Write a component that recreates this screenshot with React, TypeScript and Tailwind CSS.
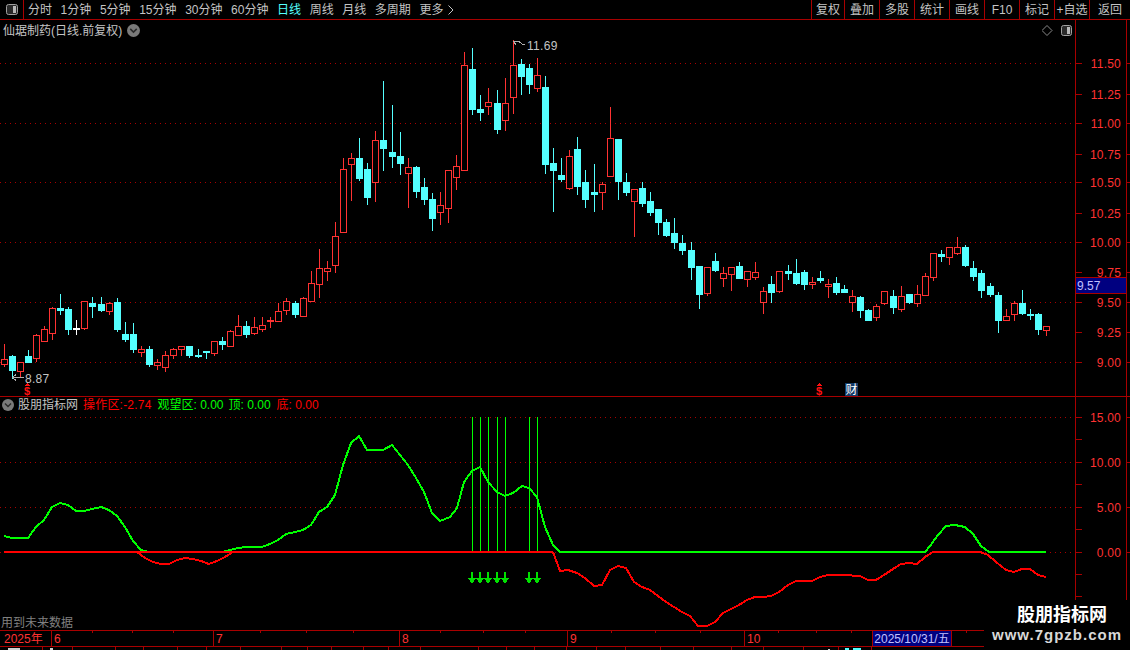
import React from 'react'

const LINE = '#a80000'
const RED = '#ff3232'
const CYAN = '#54ffff'
const GREEN = '#00ff00'
const FONT = "'Liberation Sans','Noto Sans CJK SC',sans-serif"

// wick top, body top, body bottom, wick bottom, colour (page pixels)
type Candle = [number, number, number, number, 'r' | 'c' | 'w']
const candles: Candle[] = [
  [344, 359, 364, 366, 'r'], [355, 356, 370, 378, 'c'], [362, 362, 371, 376, 'r'], [350, 356, 362, 362, 'c'],
  [334, 335, 358, 361, 'r'], [326, 329, 341, 341, 'r'], [307, 308, 333, 339, 'r'], [294, 308, 310, 314, 'c'],
  [307, 309, 329, 334, 'c'], [320, 328, 329, 334, 'w'], [301, 301, 328, 329, 'r'], [297, 303, 306, 317, 'c'],
  [297, 304, 310, 311, 'c'], [302, 303, 311, 314, 'r'], [298, 302, 329, 331, 'c'], [322, 334, 339, 341, 'c'],
  [323, 334, 349, 352, 'c'], [346, 349, 352, 356, 'r'], [346, 349, 364, 366, 'c'], [359, 362, 365, 369, 'r'],
  [351, 355, 367, 371, 'r'], [348, 349, 355, 358, 'r'], [346, 346, 349, 355, 'r'], [346, 346, 355, 357, 'c'],
  [349, 355, 356, 357, 'c'], [351, 351, 352, 358, 'c'], [341, 341, 353, 355, 'r'], [337, 341, 344, 349, 'c'],
  [330, 331, 346, 346, 'r'], [315, 326, 335, 335, 'r'], [321, 326, 334, 337, 'c'], [317, 327, 333, 334, 'r'],
  [317, 325, 329, 331, 'r'], [317, 320, 321, 327, 'r'], [303, 311, 321, 321, 'r'], [298, 301, 310, 314, 'r'],
  [301, 303, 314, 317, 'c'], [297, 298, 316, 316, 'r'], [271, 283, 301, 301, 'r'], [249, 268, 284, 297, 'r'],
  [261, 268, 271, 280, 'r'], [222, 236, 265, 272, 'r'], [158, 169, 232, 232, 'r'], [153, 158, 164, 200, 'r'],
  [138, 158, 178, 180, 'c'], [163, 169, 197, 204, 'c'], [131, 140, 182, 201, 'r'], [81, 140, 148, 170, 'c'],
  [105, 152, 156, 167, 'c'], [132, 156, 163, 174, 'c'], [158, 167, 173, 207, 'r'], [166, 167, 191, 197, 'c'],
  [178, 187, 199, 204, 'c'], [193, 199, 218, 230, 'c'], [192, 205, 212, 224, 'r'], [170, 170, 208, 222, 'r'],
  [155, 166, 177, 189, 'r'], [52, 65, 170, 170, 'r'], [48, 69, 109, 114, 'c'], [95, 109, 112, 120, 'c'],
  [88, 102, 106, 114, 'r'], [90, 103, 129, 133, 'c'], [78, 103, 120, 130, 'r'], [40, 65, 97, 113, 'r'],
  [59, 64, 76, 94, 'c'], [64, 68, 84, 93, 'c'], [58, 75, 88, 91, 'r'], [76, 87, 164, 173, 'c'],
  [148, 163, 170, 211, 'c'], [158, 175, 179, 181, 'c'], [150, 156, 188, 189, 'r'], [137, 149, 186, 194, 'c'],
  [170, 182, 199, 207, 'c'], [164, 192, 194, 211, 'c'], [182, 184, 192, 209, 'r'], [107, 138, 176, 176, 'r'],
  [139, 139, 181, 199, 'c'], [173, 182, 192, 195, 'c'], [189, 189, 201, 236, 'r'], [182, 188, 203, 206, 'c'],
  [192, 201, 212, 215, 'c'], [209, 209, 222, 234, 'c'], [219, 222, 235, 236, 'c'], [218, 233, 242, 248, 'c'],
  [235, 243, 250, 254, 'c'], [242, 250, 267, 279, 'c'], [266, 266, 294, 308, 'c'], [267, 267, 293, 295, 'r'],
  [253, 261, 270, 271, 'c'], [267, 273, 278, 286, 'r'], [267, 267, 274, 290, 'r'], [262, 266, 278, 278, 'c'],
  [271, 271, 279, 286, 'r'], [262, 272, 277, 279, 'r'], [287, 291, 302, 313, 'r'], [276, 284, 292, 302, 'c'],
  [271, 271, 291, 292, 'r'], [265, 271, 273, 279, 'c'], [259, 273, 283, 284, 'c'], [270, 272, 284, 289, 'c'],
  [277, 282, 284, 288, 'r'], [271, 278, 280, 282, 'c'], [279, 284, 286, 297, 'r'], [277, 283, 292, 294, 'c'],
  [285, 289, 292, 292, 'c'], [290, 296, 302, 311, 'r'], [296, 297, 310, 317, 'c'], [309, 310, 320, 320, 'c'],
  [304, 306, 317, 320, 'r'], [291, 291, 303, 304, 'r'], [290, 296, 307, 313, 'c'], [286, 296, 309, 311, 'r'],
  [294, 294, 302, 303, 'c'], [285, 294, 303, 306, 'r'], [273, 276, 295, 295, 'r'], [253, 253, 277, 280, 'r'],
  [250, 254, 256, 261, 'c'], [247, 247, 257, 264, 'r'], [237, 247, 253, 254, 'r'], [245, 247, 265, 266, 'c'],
  [261, 268, 276, 280, 'c'], [270, 273, 290, 297, 'c'], [283, 286, 294, 296, 'c'], [292, 295, 320, 332, 'c'],
  [309, 316, 320, 320, 'r'], [301, 303, 314, 320, 'r'], [290, 303, 313, 314, 'c'], [309, 314, 315, 319, 'c'],
  [313, 314, 329, 334, 'c'], [326, 326, 330, 335, 'r'],
]

const greenLine =
  '4,536 12,538 28,538 36,527 44,520 52,507 60,503 68,505 76,511 84,511 92,509 101,507 109,510 117,516 125,527 133,541 141,550 149,552 222,552 230,550 238,548 246,547 262,547 270,544 278,540 286,534 295,532 303,530 311,525 319,512 327,507 335,495 343,465 351,443 359,436 367,450 383,450 392,445 400,455 408,465 416,478 424,492 432,513 440,521 450,517 457,508 464,482 472,471 480,467 488,482 497,492 505,496 513,493 522,486 529,488 537,497 545,527 553,545 560,552 925,552 930,546 938,535 946,526 955,525 965,527 973,534 981,546 989,552 1046,552'
const redDips =
  '137,552 145,558 153,562 161,564 169,564 177,560 185,558 193,559 201,561 209,564 217,561 225,557 233,552'
const redTail =
  '553,552 560,571 568,570 577,573 585,578 594,586 602,585 610,570 618,566 626,568 634,582 642,587 650,590 658,596 666,602 674,607 682,612 690,616 698,626 707,626 715,622 723,613 731,609 739,605 747,600 755,597 763,597 771,596 779,592 788,585 796,581 812,581 820,577 828,575 844,575 860,576 868,580 876,580 884,575 893,569 901,564 909,563 917,564 925,557 933,552 980,552 988,555 996,562 1006,570 1014,572 1022,569 1030,569 1038,575 1046,577'

const signals = [472, 480, 488, 497, 505, 529, 537]
const priceGrid = [63, 123, 182, 242, 302, 362]
const priceLabels: [string, number][] = [
  ['11.50', 63], ['11.25', 94], ['11.00', 123], ['10.75', 154], ['10.50', 182], ['10.25', 213],
  ['10.00', 242], ['9.75', 272], ['9.50', 302], ['9.25', 332], ['9.00', 362],
]
const indicatorLabels: [string, number][] = [['15.00', 417], ['10.00', 462], ['5.00', 507], ['0.00', 552]]
const minorTicks = [439, 484, 529, 574, 596]
const timeTicks = [92, 132, 173, 260, 306, 353, 440, 483, 525, 611, 655, 700, 778, 816, 851, 966]

const periods = ['分时', '1分钟', '5分钟', '15分钟', '30分钟', '60分钟', '日线', '周线', '月线', '多周期']
const actions: [string, string][] = [
  ['复权', 'w-[33px]'], ['叠加', 'w-[35px]'], ['多股', 'w-[35px]'], ['统计', 'w-[35px]'], ['画线', 'w-[35px]'],
  ['F10', 'w-[35px]'], ['标记', 'w-[35px]'], ['+自选', 'w-[35px]'], ['返回', 'w-[41px]'],
]
const months: [string, string][] = [['6', 'w-[162px]'], ['7', 'w-[186px]'], ['8', 'w-[168px]'], ['9', 'w-[177px]'], ['10', 'w-[128px]']]
const bottomCuts = [
  'w-[43px]', 'w-[30px]', 'w-[43px]', 'w-[28px]', 'w-[34px]', 'w-[29px]', 'w-[34px]', 'w-[41px]', 'w-[26px]',
  'w-[24px]', 'w-[32px]', 'w-[25px]', 'w-[32px]', 'w-[58px]', 'w-[28px]', 'w-[28px]', 'w-[32px]', 'w-[30px]',
  'w-[29px]', 'w-[35px]', 'w-[33px]', 'w-[38px]', 'w-[32px]', 'w-[40px]', 'w-[35px]', 'w-[33px]',
]

function PanelIcon({ className }: { className: string }) {
  return (
    <svg viewBox="0 0 12 11" className={className}>
      <rect x="0.5" y="0.5" width="11" height="10" rx="2" fill="#2a2a2a" stroke="#a0a0a0" />
      <rect x="7" y="2" width="3" height="7" fill="#b8b8b8" />
    </svg>
  )
}

function DropIcon({ className }: { className: string }) {
  return (
    <svg viewBox="0 0 12 12" className={className}>
      <circle cx="6" cy="6" r="6" fill="#7a7a7a" />
      <path d="M3 4.5 L6 7.5 L9 4.5" fill="none" stroke="#2a2a2a" strokeWidth="1.4" />
    </svg>
  )
}

function CandleMark({ c, i }: { c: Candle; i: number }) {
  const x = Math.floor(4.095 + i * 8.0816)
  const color = c[4] === 'r' ? RED : c[4] === 'c' ? CYAN : '#ffffff'
  return (
    <g>
      <rect x={x} y={c[0]} width={1} height={c[3] - c[0] + 1} fill={color} />
      {c[4] === 'r' ? (
        <rect x={x - 2.5} y={c[1] + 0.5} width={6} height={Math.max(c[2] - c[1], 1)} fill="#000" stroke={color} />
      ) : (
        <rect x={x - 3} y={c[1]} width={7} height={c[2] - c[1] + 1} fill={color} />
      )}
    </g>
  )
}

function CashMark({ x }: { x: number }) {
  return (
    <g>
      <path d={`M${x} 383 L${x + 3} 386 H${x - 3} Z`} fill="#ff1010" />
      <text x={x} y={395} textAnchor="middle" fontSize="11" fontWeight="700" fill="#ff1010" fontFamily={FONT} shapeRendering="auto">
        $
      </text>
    </g>
  )
}

function Axis({ labels, ticks, top, height }: { labels: [string, number][]; ticks: number[]; top: number; height: number }) {
  return (
    <svg viewBox={`1076 ${top} 54 ${height}`} className="h-full w-[54px]" shapeRendering="crispEdges">
      <rect x="1126" y={top} width="1" height={height} fill={LINE} />
      {[...labels.map((l) => l[1]), ...ticks].map((y) => (
        <rect key={y} x="1076" y={y} width="6" height="1" fill={LINE} />
      ))}
      {labels.map((l) => (
        <rect key={l[1]} x="1127" y={l[1]} width="3" height="1" fill={LINE} />
      ))}
      {labels.map(([t, y]) => (
        <text key={t} x="1121" y={y + 5} textAnchor="end" fontSize="12" letterSpacing="0.2" fill={RED} fontFamily={FONT} shapeRendering="auto">
          {t}
        </text>
      ))}
    </svg>
  )
}

export default function App() {
  return (
    <div className="relative flex h-[650px] w-[1130px] flex-col overflow-hidden bg-black text-[12px] leading-none text-[#c4c4c4] font-['Liberation_Sans','Noto_Sans_CJK_SC',sans-serif]">
      <div className="flex h-[20px] shrink-0 items-stretch border-b border-[#a80000]">
        <div className="flex w-[24px] items-center justify-center border-r border-[#a80000]">
          <PanelIcon className="h-[11px] w-[12px]" />
        </div>
        <div className="flex items-center gap-[8.6px] pl-[4px]">
          {periods.map((p) => (
            <span key={p} className={p === '日线' ? 'text-[#54ffff]' : ''}>
              {p}
            </span>
          ))}
          <span className="flex items-center gap-[5px]">
            更多
            <svg viewBox="0 0 6 10" className="h-[10px] w-[6px]">
              <path d="M0.5 0.5 L5 5 L0.5 9.5" fill="none" stroke="#c4c4c4" />
            </svg>
          </span>
        </div>
        <div className="ml-auto flex">
          {actions.map(([a, w]) => (
            <div key={a} className={`flex items-center justify-center border-l border-[#a80000] ${w}`}>
              {a}
            </div>
          ))}
        </div>
      </div>

      <div className="flex h-[377px] shrink-0 border-b border-[#a80000]">
        <div className="relative w-[1075px]">
          <svg viewBox="0 20 1075 376" className="h-full w-full" shapeRendering="crispEdges">
            {priceGrid.map((y) => (
              <line key={y} x1="0" x2="1075" y1={y + 0.5} y2={y + 0.5} stroke="#a80000" strokeDasharray="1 4" />
            ))}
            {candles.map((c, i) => (
              <CandleMark key={i} c={c} i={i} />
            ))}
            <path d="M24 377.5 H12.5 M12.5 377.5 L16 374.5 M12.5 377.5 L16 380.5" stroke="#b0b0b0" fill="none" />
            <path d="M513.5 41.5 L519 41.5 L522 44 L525 44 M513.5 41.5 L516 45" stroke="#b0b0b0" fill="none" />
            <CashMark x={27} />
            <CashMark x={819} />
          </svg>
          <div className="absolute left-[3px] top-[4px] flex items-center gap-[5px]">
            <span>仙琚制药(日线.前复权)</span>
            <DropIcon className="h-[13px] w-[13px]" />
          </div>
          <span className="absolute left-[25px] top-[353px] tracking-[0.3px]">8.87</span>
          <span className="absolute left-[527px] top-[20px] tracking-[0.3px]">11.69</span>
          <span className="absolute left-[845px] top-[363px] flex h-[13px] w-[13px] items-center justify-center bg-[#123a66] text-white">财</span>
          <svg viewBox="0 0 30 11" className="absolute left-[1042px] top-[5px] h-[11px] w-[30px]">
            <path d="M5 0.5 L10 5.5 L5 10.5 L0 5.5 Z" fill="none" stroke="#8a8a8a" />
            <rect x="19.5" y="0.5" width="10" height="10" rx="2" fill="#2a2a2a" stroke="#a0a0a0" />
            <rect x="25" y="2" width="3" height="7" fill="#b8b8b8" />
          </svg>
        </div>
        <div className="relative border-l border-[#a80000]">
          <Axis labels={priceLabels} ticks={[]} top={20} height={376} />
          <div className="absolute left-0 top-[257px] flex h-[17px] w-[50px] items-center border-y border-[#a80000] bg-[#000080] pl-[1px] text-[#c0c0ff]">
            9.57
          </div>
        </div>
      </div>

      <div className="flex h-[233px] shrink-0">
        <div className="relative w-[1075px]">
          <svg viewBox="0 397 1075 233" className="h-full w-full" shapeRendering="crispEdges">
            {indicatorLabels.map(([t, y]) => (
              <line key={t} x1="0" x2="1075" y1={y + 0.5} y2={y + 0.5} stroke="#a80000" strokeDasharray="1 4" />
            ))}
            {signals.map((x) => (
              <g key={x}>
                <rect x={x} y={417} width={1} height={135} fill={GREEN} />
                <rect x={x - 1} y={572} width={2} height={7} fill="#00e000" />
                <path d={`M${x - 4} 578 H${x + 4} L${x} 584 Z`} fill="#00e000" />
              </g>
            ))}
            <polyline points={greenLine} fill="none" stroke={GREEN} strokeWidth="2" />
            <polyline points="4,552 553,552" fill="none" stroke="#ff0000" strokeWidth="2" />
            <polyline points={redDips} fill="none" stroke="#ff0000" strokeWidth="2" />
            <polyline points={redTail} fill="none" stroke="#ff0000" strokeWidth="2" />
          </svg>
          <div className="absolute left-[2px] top-[2px] flex items-center whitespace-pre">
            <DropIcon className="h-[12px] w-[12px]" />
            <span className="ml-[4px]">股朋指标网</span>
            <span className="ml-[5px] tracking-[0.2px] text-[#ff0000]">操作区:-2.74</span>
            <span className="ml-[6px] text-[#00ff00]">观望区: 0.00</span>
            <span className="ml-[5px] text-[#00ff00]">顶: 0.00</span>
            <span className="ml-[6px] text-[#ff0000]">底: 0.00</span>
          </div>
          <span className="absolute bottom-[1px] left-[1px] text-[#808080]">用到未来数据</span>
        </div>
        <div className="border-l border-[#a80000]">
          <Axis labels={indicatorLabels} ticks={minorTicks} top={397} height={233} />
        </div>
      </div>

      <div className="relative flex h-[17px] shrink-0 items-center border-y border-[#a80000] text-[#ff3232]">
        <span className="w-[51px] pl-[4px]">2025年</span>
        {months.map(([m, w]) => (
          <span key={m} className={`flex h-full items-center border-l border-[#a80000] pl-[2px] ${w}`}>
            {m}
          </span>
        ))}
        <span className="flex h-full w-[80px] items-center justify-center border-x border-[#a80000] bg-[#000080] text-[#c0c0ff]">
          2025/10/31/五
        </span>
        <svg viewBox="0 0 1130 3" className="absolute left-0 top-0 h-[3px] w-[1130px]" shapeRendering="crispEdges">
          {timeTicks.map((x) => (
            <rect key={x} x={x} y={0} width={1} height={2} fill={LINE} />
          ))}
        </svg>
      </div>
      <div className="relative flex h-[3px] overflow-hidden">
        {bottomCuts.map((w, i) => (
          <div key={i} className={`h-full shrink-0 border-r border-[#a80000] ${w}`} />
        ))}
        <svg viewBox="0 0 1130 3" className="absolute left-0 top-0 h-[3px] w-[1130px]" shapeRendering="crispEdges">
          <rect x="8" y="1" width="12" height="2" fill="#d0d0d0" />
          <rect x="50" y="1" width="3" height="2" fill="#d0d0d0" />
          <rect x="828" y="2" width="2" height="1" fill="#d0d0d0" />
          <rect x="845" y="1" width="4" height="2" fill={CYAN} />
          <rect x="853" y="1" width="8" height="2" fill={CYAN} />
        </svg>
      </div>

      <div className="absolute bottom-0 right-0 flex h-[50px] w-[146px] flex-col items-center bg-black pt-[5px]">
        <span className="ml-[10px] text-[18px] font-bold leading-[20px] text-white">股朋指标网</span>
        <span className="mt-[2px] text-[15px] font-bold leading-[15px] tracking-[1px] text-[#d8d8d8]">www.7gpzb.com</span>
      </div>
    </div>
  )
}
